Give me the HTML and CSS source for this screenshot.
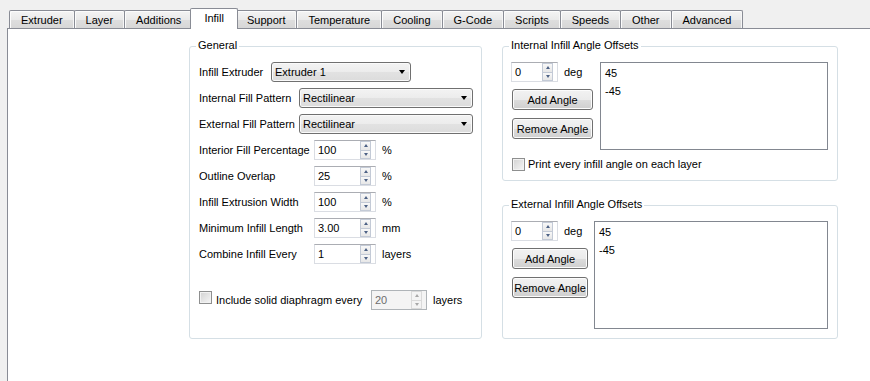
FILE: index.html
```html
<!DOCTYPE html>
<html lang="en">
<head>
    <meta charset="UTF-8">
    <title>Infill settings</title>
    <link rel="stylesheet" href="styles.css">
</head>
<body>

    <div class="window">
        <div class="tabs">
            <div class="tab">Extruder</div>
            <div class="tab">Layer</div>
            <div class="tab">Additions</div>
            <div class="tab active">Infill</div>
            <div class="tab">Support</div>
            <div class="tab">Temperature</div>
            <div class="tab">Cooling</div>
            <div class="tab">G-Code</div>
            <div class="tab">Scripts</div>
            <div class="tab">Speeds</div>
            <div class="tab">Other</div>
            <div class="tab">Advanced</div>
        </div>

        <div class="pane">
            <div class="group general">
                <div class="group-title">General</div>

                <div class="form">
                    <div class="row">
                        <span class="label w-72">Infill Extruder</span>
                        <div class="combo combo-short"><span>Extruder 1</span><i class="arrow"></i></div>
                    </div>
                    <div class="row">
                        <span class="label w-100">Internal Fill Pattern</span>
                        <div class="combo combo-long"><span>Rectilinear</span><i class="arrow"></i></div>
                    </div>
                    <div class="row">
                        <span class="label w-100">External Fill Pattern</span>
                        <div class="combo combo-long"><span>Rectilinear</span><i class="arrow"></i></div>
                    </div>
                    <div class="row">
                        <span class="label w-115">Interior Fill Percentage</span>
                        <div class="spin"><span class="spin-value">100</span><span class="spin-btns"><i class="spin-btn up"></i><i class="spin-btn down"></i></span></div>
                        <span class="unit">%</span>
                    </div>
                    <div class="row">
                        <span class="label w-115">Outline Overlap</span>
                        <div class="spin"><span class="spin-value">25</span><span class="spin-btns"><i class="spin-btn up"></i><i class="spin-btn down"></i></span></div>
                        <span class="unit">%</span>
                    </div>
                    <div class="row">
                        <span class="label w-115">Infill Extrusion Width</span>
                        <div class="spin"><span class="spin-value">100</span><span class="spin-btns"><i class="spin-btn up"></i><i class="spin-btn down"></i></span></div>
                        <span class="unit">%</span>
                    </div>
                    <div class="row">
                        <span class="label w-115">Minimum Infill Length</span>
                        <div class="spin"><span class="spin-value">3.00</span><span class="spin-btns"><i class="spin-btn up"></i><i class="spin-btn down"></i></span></div>
                        <span class="unit">mm</span>
                    </div>
                    <div class="row">
                        <span class="label w-115">Combine Infill Every</span>
                        <div class="spin"><span class="spin-value">1</span><span class="spin-btns"><i class="spin-btn up"></i><i class="spin-btn down"></i></span></div>
                        <span class="unit">layers</span>
                    </div>
                </div>

                <div class="row diaphragm-row">
                    <span class="check"></span>
                    <span class="check-label diaphragm-label">Include solid diaphragm every</span>
                    <div class="spin disabled"><span class="spin-value">20</span><span class="spin-btns"><i class="spin-btn up"></i><i class="spin-btn down"></i></span></div>
                    <span class="unit">layers</span>
                </div>
            </div>

            <div class="side">
                <div class="group angles">
                    <div class="group-title">Internal Infill Angle Offsets</div>
                    <div class="angles-body">
                        <div class="angle-controls">
                            <div class="spin-row">
                                <div class="spin small"><span class="spin-value">0</span><span class="spin-btns"><i class="spin-btn up"></i><i class="spin-btn down"></i></span></div>
                                <span class="unit">deg</span>
                            </div>
                            <div class="btn add">Add Angle</div>
                            <div class="btn remove">Remove Angle</div>
                        </div>
                        <div class="list">
                            <div class="list-item">45</div>
                            <div class="list-item">-45</div>
                        </div>
                    </div>
                    <div class="print-row">
                        <span class="check"></span>
                        <span class="check-label">Print every infill angle on each layer</span>
                    </div>
                </div>

                <div class="group angles ext">
                    <div class="group-title">External Infill Angle Offsets</div>
                    <div class="angles-body">
                        <div class="angle-controls">
                            <div class="spin-row">
                                <div class="spin small"><span class="spin-value">0</span><span class="spin-btns"><i class="spin-btn up"></i><i class="spin-btn down"></i></span></div>
                                <span class="unit">deg</span>
                            </div>
                            <div class="btn add">Add Angle</div>
                            <div class="btn remove">Remove Angle</div>
                        </div>
                        <div class="list">
                            <div class="list-item">45</div>
                            <div class="list-item">-45</div>
                        </div>
                    </div>
                </div>
            </div>
        </div>
    </div>

</body>
</html>
```

FILE: styles.css
```css
body {
    margin: 0;
    background: #f0f0f0;
    font-family: "Liberation Sans", Arial, sans-serif;
    font-size: 11px;
    color: #000;
    overflow: hidden;
}
.window {
    padding: 8px 0 0 7px;
}

/* tab bar */
.tabs {
    display: flex;
    align-items: flex-end;
    height: 21px;
    margin: 0 0 -1px 2px;
}
.tab {
    box-sizing: border-box;
    height: 18px;
    margin: 0 0 1px -1px;
    padding: 1px 11px 0;
    line-height: 16px;
    white-space: nowrap;
    border: 1px solid #898c95;
    border-bottom: 0;
    border-radius: 2px 2px 0 0;
    background: linear-gradient(#f4f4f4, #eaeaea 50%, #dedede 51%, #d7d7d7);
    box-shadow: inset 1px 1px 0 #fcfcfc, inset -1px 0 0 #f6f6f6;
}
.tab:first-child {
    margin-left: 0;
}
.tab.active {
    position: relative;
    z-index: 1;
    height: 21px;
    margin: 0 -2px 0 -3px;
    padding: 1px 13px 0;
    background: #fff;
    box-shadow: none;
}

/* page */
.pane {
    box-sizing: border-box;
    display: flex;
    align-items: flex-start;
    gap: 20px;
    width: calc(100vw - 7px);
    height: calc(100vh - 28px);
    padding: 17px 0 0 181px;
    background: #fff;
    border-top: 1px solid #898c95;
    border-left: 1px solid #898c95;
}
.group {
    box-sizing: border-box;
    border: 1px solid #d5dfe5;
    border-radius: 3px;
}
.group-title {
    display: table;
    margin: -8px 0 0 6px;
    padding: 0 2px;
    line-height: 13px;
    background: #fff;
}
.general {
    width: 293px;
    height: 293px;
}
.form {
    display: flex;
    flex-direction: column;
    gap: 6px;
    margin-top: 10px;
    padding-left: 9px;
}
.row {
    display: flex;
    align-items: center;
    height: 20px;
}
.label {
    flex: none;
    line-height: 13px;
    white-space: nowrap;
}
.w-72 { width: 72px; }
.w-100 { width: 100px; }
.w-115 { width: 115px; }
.unit {
    margin-left: 6px;
    line-height: 13px;
}

/* combo box */
.combo {
    box-sizing: border-box;
    display: flex;
    align-items: center;
    justify-content: space-between;
    height: 20px;
    padding: 0 5px 0 3px;
    border: 1px solid #707070;
    border-radius: 3px;
    background: linear-gradient(#f3f3f3, #ececec 50%, #e2e2e2 51%, #dcdcdc);
    box-shadow: inset 0 0 0 1px #fafafa;
}
.combo-short { width: 140px; }
.combo-long { width: 174px; }
.arrow {
    width: 0;
    height: 0;
    border-left: 3px solid transparent;
    border-right: 3px solid transparent;
    border-top: 4px solid #000;
}

/* spin box */
.spin {
    box-sizing: border-box;
    display: flex;
    align-items: center;
    width: 62px;
    height: 20px;
    border: 1px solid #dadde3;
    border-top-color: #abadb3;
    background: #fff;
}
.spin-value {
    flex: 1;
    padding-left: 3px;
    line-height: 13px;
}
.spin-btns {
    display: flex;
    flex-direction: column;
    width: 11px;
    height: 18px;
    margin-right: 4px;
}
.spin-btn {
    box-sizing: border-box;
    flex: 1;
    display: flex;
    align-items: center;
    justify-content: center;
    border: 1px solid #c3cad6;
    background: linear-gradient(#f8f8f8, #e7e7e7);
}
.spin-btn.down {
    margin-top: -1px;
}
.spin-btn::after {
    content: "";
    width: 0;
    height: 0;
    border-left: 2.5px solid transparent;
    border-right: 2.5px solid transparent;
}
.spin-btn.up::after {
    border-bottom: 3px solid #4d6185;
}
.spin-btn.down::after {
    border-top: 3px solid #4d6185;
}
.spin.disabled {
    width: 56px;
    background: #f4f4f4;
    border-color: #afb4b8;
    color: #6d6d6d;
}
.spin.disabled .spin-btn {
    border-color: #dadada;
    background: #f4f4f4;
}
.spin.disabled .spin-btn.up::after {
    border-bottom-color: #a8a8a8;
}
.spin.disabled .spin-btn.down::after {
    border-top-color: #a8a8a8;
}

/* check box */
.check {
    flex: none;
    box-sizing: border-box;
    width: 13px;
    height: 13px;
    border: 1px solid #8e8f8f;
    background: linear-gradient(135deg, #d2d2d2, #f6f6f6);
    box-shadow: inset 0 0 0 1px #f2f2f2;
}
.check-label {
    margin-left: 3px;
    line-height: 13px;
    white-space: nowrap;
}
.diaphragm-row {
    margin-top: 26px;
    padding-left: 9px;
}
.diaphragm-row .check {
    align-self: flex-start;
    margin-top: 1px;
}
.diaphragm-label {
    width: 155px;
    margin-left: 4px;
}

/* angle offsets */
.side {
    display: flex;
    flex-direction: column;
    gap: 24px;
    width: 336px;
}
.angles {
    height: 135px;
}
.angles.ext {
    height: 134px;
}
.angles-body {
    display: flex;
    align-items: flex-start;
    margin-top: 10px;
    padding-left: 8px;
}
.angle-controls {
    display: flex;
    flex-direction: column;
    width: 82px;
}
.ext .angle-controls {
    width: 77px;
}
.spin-row {
    display: flex;
    align-items: center;
}
.spin.small {
    width: 47px;
}
.btn {
    box-sizing: border-box;
    display: flex;
    align-items: center;
    justify-content: center;
    height: 21px;
    margin-left: 1px;
    border: 1px solid #707070;
    border-radius: 3px;
    background: linear-gradient(#f2f2f2, #ebebeb 50%, #dddddd 51%, #cfcfcf);
    box-shadow: inset 0 0 0 1px #fcfcfc;
    white-space: nowrap;
}
.btn.add { margin-top: 7px; }
.btn.remove { margin-top: 8px; }
.list {
    box-sizing: border-box;
    width: 228px;
    height: 88px;
    margin-left: 7px;
    padding: 1px 0 0 4px;
    border: 1px solid #828790;
    background: #fff;
}
.ext .list {
    width: 234px;
    height: 108px;
    margin-left: 6px;
}
.list-item {
    line-height: 18px;
}
.print-row {
    display: flex;
    align-items: center;
    height: 13px;
    margin-top: 8px;
    padding-left: 9px;
}
```
